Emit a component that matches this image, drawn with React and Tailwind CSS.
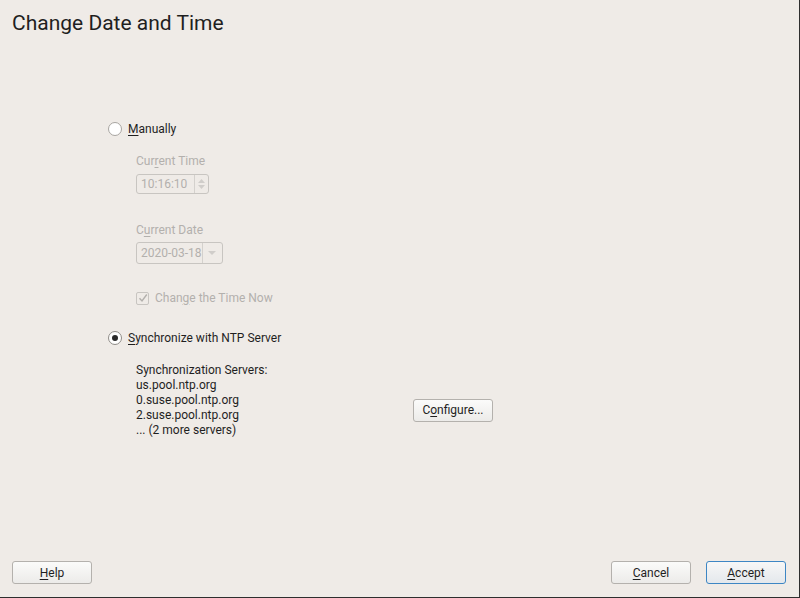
import React from 'react';

const Mn = ({ children }) => <span className="underline underline-offset-2">{children}</span>;

const Button = ({ children, primary }) => (
  <button
    className={`w-[80px] h-[23px] rounded-[3px] border text-[12px] text-[#1f1f1f] ${
      primary
        ? 'border-[#3d86c4] bg-gradient-to-b from-[#f7f7f7] to-[#e4e8ec]'
        : 'border-[#b4b1ad] bg-gradient-to-b from-[#fbfbfa] to-[#ecebe9]'
    }`}
  >
    {children}
  </button>
);

export default function App() {
  return (
    <div
      className="w-[800px] h-[598px] bg-[#efebe7] border-r border-b border-[#2e2e2e] flex flex-col text-[#1f1f1f]"
      style={{ fontFamily: 'Roboto, "Noto Sans", sans-serif' }}
    >
      <h1 className="text-[21px] leading-[24px] pl-[12px] pt-[11px]">Change Date and Time</h1>

      <div className="pl-[108px] pt-[86px] text-[12px] leading-[15px] flex-1">
        {/* Manually */}
        <div className="flex items-center gap-[6px] h-[16px]">
          <span className="w-[14px] h-[14px] rounded-full border border-[#a8a5a1] bg-white" />
          <span>
            <Mn>M</Mn>anually
          </span>
        </div>

        <div className="pl-[28px] text-[#b3b0ad]">
          <div className="mt-[17px]">
            Cur<Mn>r</Mn>ent Time
          </div>
          <div className="mt-[5px] flex w-[73px] h-[20px] border border-[#c8c5c1] rounded-[3px]">
            <span className="flex-1 pl-[4px] leading-[18px]">10:16:10</span>
            <span className="w-[14px] border-l border-[#d4d1cd] flex flex-col items-center justify-center gap-[2px]">
              <svg width="7" height="4" viewBox="0 0 7 4"><path d="M0 4 L3.5 0 L7 4Z" fill="#d0cdca" /></svg>
              <svg width="7" height="4" viewBox="0 0 7 4"><path d="M0 0 L3.5 4 L7 0Z" fill="#d0cdca" /></svg>
            </span>
          </div>

          <div className="mt-[29px]">
            C<Mn>u</Mn>rrent Date
          </div>
          <div className="mt-[4px] flex w-[87px] h-[22px] border border-[#c8c5c1] rounded-[3px]">
            <span className="pl-[4px] leading-[20px]">2020-03-18</span>
            <span className="flex-1 border-l border-[#d4d1cd] flex items-center justify-center">
              <svg width="8" height="4" viewBox="0 0 8 4"><path d="M0 0 L4 4 L8 0Z" fill="#d0cdca" /></svg>
            </span>
          </div>

          <div className="mt-[27px] flex items-center gap-[6px] h-[14px]">
            <span className="w-[13px] h-[13px] border border-[#c8c5c1] rounded-[2px] flex items-center justify-center">
              <svg width="10" height="10" viewBox="0 0 10 10">
                <path d="M1.5 5.2 L4 8 L8.8 1.5" fill="none" stroke="#b3b0ad" strokeWidth="1.4" />
              </svg>
            </span>
            <span>
              Chan<Mn>g</Mn>e the Time Now
            </span>
          </div>
        </div>

        {/* NTP */}
        <div className="mt-[25px] flex items-center gap-[6px] h-[16px]">
          <span className="w-[14px] h-[14px] rounded-full border border-[#8f8c88] bg-white flex items-center justify-center">
            <span className="w-[6px] h-[6px] rounded-full bg-[#2a2a2a]" />
          </span>
          <span>
            <Mn>S</Mn>ynchronize with NTP Server
          </span>
        </div>

        <div className="pl-[28px] mt-[17px] flex">
          <div className="w-[277px]">
            <div>Synchronization Servers:</div>
            <div>us.pool.ntp.org</div>
            <div>0.suse.pool.ntp.org</div>
            <div>2.suse.pool.ntp.org</div>
            <div>... (2 more servers)</div>
          </div>
          <div className="flex items-center pt-[20px]">
            <Button>
              C<Mn>o</Mn>nfigure...
            </Button>
          </div>
        </div>
      </div>

      <div className="flex items-center justify-between pl-[12px] pr-[13px] pb-[13px]">
        <Button>
          <Mn>H</Mn>elp
        </Button>
        <div className="flex gap-[15px]">
          <Button>
            <Mn>C</Mn>ancel
          </Button>
          <Button primary>
            <Mn>A</Mn>ccept
          </Button>
        </div>
      </div>
    </div>
  );
}
